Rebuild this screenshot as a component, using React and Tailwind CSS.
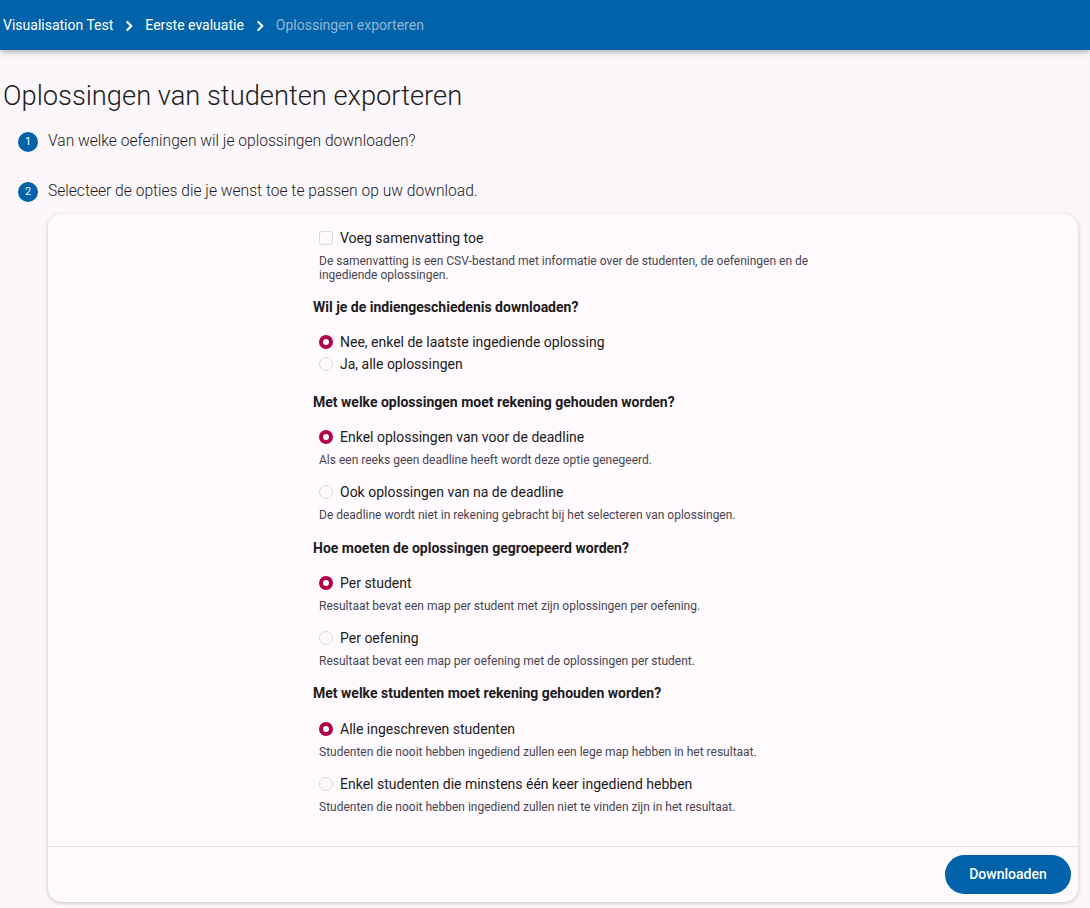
import React from "react";

const Chevron = () => (
  <svg width="14" height="14" viewBox="0 0 24 24" fill="none" stroke="white" strokeWidth="3.5" strokeLinecap="round" strokeLinejoin="round" className="mx-[9px]">
    <path d="M9 5l7 7-7 7" />
  </svg>
);

function Radio({ checked, label, className = "" }) {
  return (
    <div className={"flex items-center h-[22px] pl-[6px] " + className}>
      {checked ? (
        <span className="w-[14px] h-[14px] rounded-full border-[4px] border-[#b3004b] bg-white shrink-0" />
      ) : (
        <span className="w-[14px] h-[14px] rounded-full border border-[#dcd6dc] bg-[#fdf9fd] shrink-0" />
      )}
      <span className="ml-[7px] text-[14px] text-[#1d1b20]">{label}</span>
    </div>
  );
}

function Help({ children, className = "" }) {
  return (
    <p className={"pl-[6px] text-[12px] leading-[14px] text-[#49454f] " + className}>{children}</p>
  );
}

function Question({ children, className = "" }) {
  return (
    <h3 className={"text-[14px] leading-[20px] font-bold text-[#1d1b20] " + className}>{children}</h3>
  );
}

export default function App() {
  return (
    <div className="min-h-[908px] bg-[#fbf7fb]" style={{ fontFamily: "Roboto, 'Noto Sans', sans-serif" }}>
      <header className="h-[50px] bg-[#0062a8] flex items-center pl-[3px] pt-[1px] shadow-[0_2px_6px_rgba(0,0,0,0.3)] relative z-10">
        <span className="text-white text-[14px]">Visualisation Test</span>
        <Chevron />
        <span className="text-white text-[14px]">Eerste evaluatie</span>
        <Chevron />
        <span className="text-[#8fb6d8] text-[14px]">Oplossingen exporteren</span>
      </header>
      <main className="pl-[3px] pr-[12px] pb-[6px]">
        <h1 className="mt-[27px] text-[27.3px] leading-[38px] font-light text-[#1d1b20]">
          Oplossingen van studenten exporteren
        </h1>
        <div className="mt-[12px] flex items-center h-[30px] pl-[15px]">
          <span className="w-[20px] h-[20px] rounded-full bg-[#0062a8] text-white text-[11px] flex items-center justify-center">1</span>
          <span className="ml-[10px] text-[15.6px] font-light text-[#1d1b20]">Van welke oefeningen wil je oplossingen downloaden?</span>
        </div>
        <div className="mt-[20px] flex items-center h-[30px] pl-[15px]">
          <span className="w-[20px] h-[20px] rounded-full bg-[#0062a8] text-white text-[11px] flex items-center justify-center">2</span>
          <span className="ml-[10px] text-[15.6px] font-light text-[#1d1b20]">Selecteer de opties die je wenst toe te passen op uw download.</span>
        </div>
        <div className="mt-[7px] ml-[45px] bg-[#fefafe] rounded-[14px] shadow-[0_1px_4px_rgba(0,0,0,0.22)]">
          <div className="w-[500px] mx-auto pt-[14px] pb-[32px]">
            <div className="flex items-center h-[20px] pl-[6px]">
              <span className="w-[14px] h-[14px] rounded-[3px] border border-[#dcd6dc] bg-[#fdf9fd] shrink-0" />
              <span className="ml-[7px] text-[14px] text-[#1d1b20]">Voeg samenvatting toe</span>
            </div>
            <Help className="mt-[6px]">
              De samenvatting is een CSV-bestand met informatie over de studenten, de oefeningen en de ingediende oplossingen.
            </Help>
            <Question className="mt-[15px]">Wil je de indiengeschiedenis downloaden?</Question>
            <Radio checked label="Nee, enkel de laatste ingediende oplossing" className="mt-[14px]" />
            <Radio label="Ja, alle oplossingen" />

            <Question className="mt-[17px]">Met welke oplossingen moet rekening gehouden worden?</Question>
            <Radio checked label="Enkel oplossingen van voor de deadline" className="mt-[14px]" />
            <Help className="mt-[5px]">Als een reeks geen deadline heeft wordt deze optie genegeerd.</Help>
            <Radio label="Ook oplossingen van na de deadline" className="mt-[14px]" />
            <Help className="mt-[5px]">De deadline wordt niet in rekening gebracht bij het selecteren van oplossingen.</Help>

            <Question className="mt-[16px]">Hoe moeten de oplossingen gegroepeerd worden?</Question>
            <Radio checked label="Per student" className="mt-[14px]" />
            <Help className="mt-[5px]">Resultaat bevat een map per student met zijn oplossingen per oefening.</Help>
            <Radio label="Per oefening" className="mt-[14px]" />
            <Help className="mt-[5px]">Resultaat bevat een map per oefening met de oplossingen per student.</Help>

            <Question className="mt-[15px]">Met welke studenten moet rekening gehouden worden?</Question>
            <Radio checked label="Alle ingeschreven studenten" className="mt-[15px]" />
            <Help className="mt-[5px]">Studenten die nooit hebben ingediend zullen een lege map hebben in het resultaat.</Help>
            <Radio label="Enkel studenten die minstens één keer ingediend hebben" className="mt-[14px]" />
            <Help className="mt-[5px]">Studenten die nooit hebben ingediend zullen niet te vinden zijn in het resultaat.</Help>
          </div>
          <div className="border-t border-[#e6e0e6] flex justify-end pt-[8px] pb-[8px] pr-[7px]">
            <button className="h-[39px] w-[126px] rounded-full bg-[#0062a8] text-white text-[14px] font-medium">
              Downloaden
            </button>
          </div>
        </div>
      </main>
    </div>
  );
}
